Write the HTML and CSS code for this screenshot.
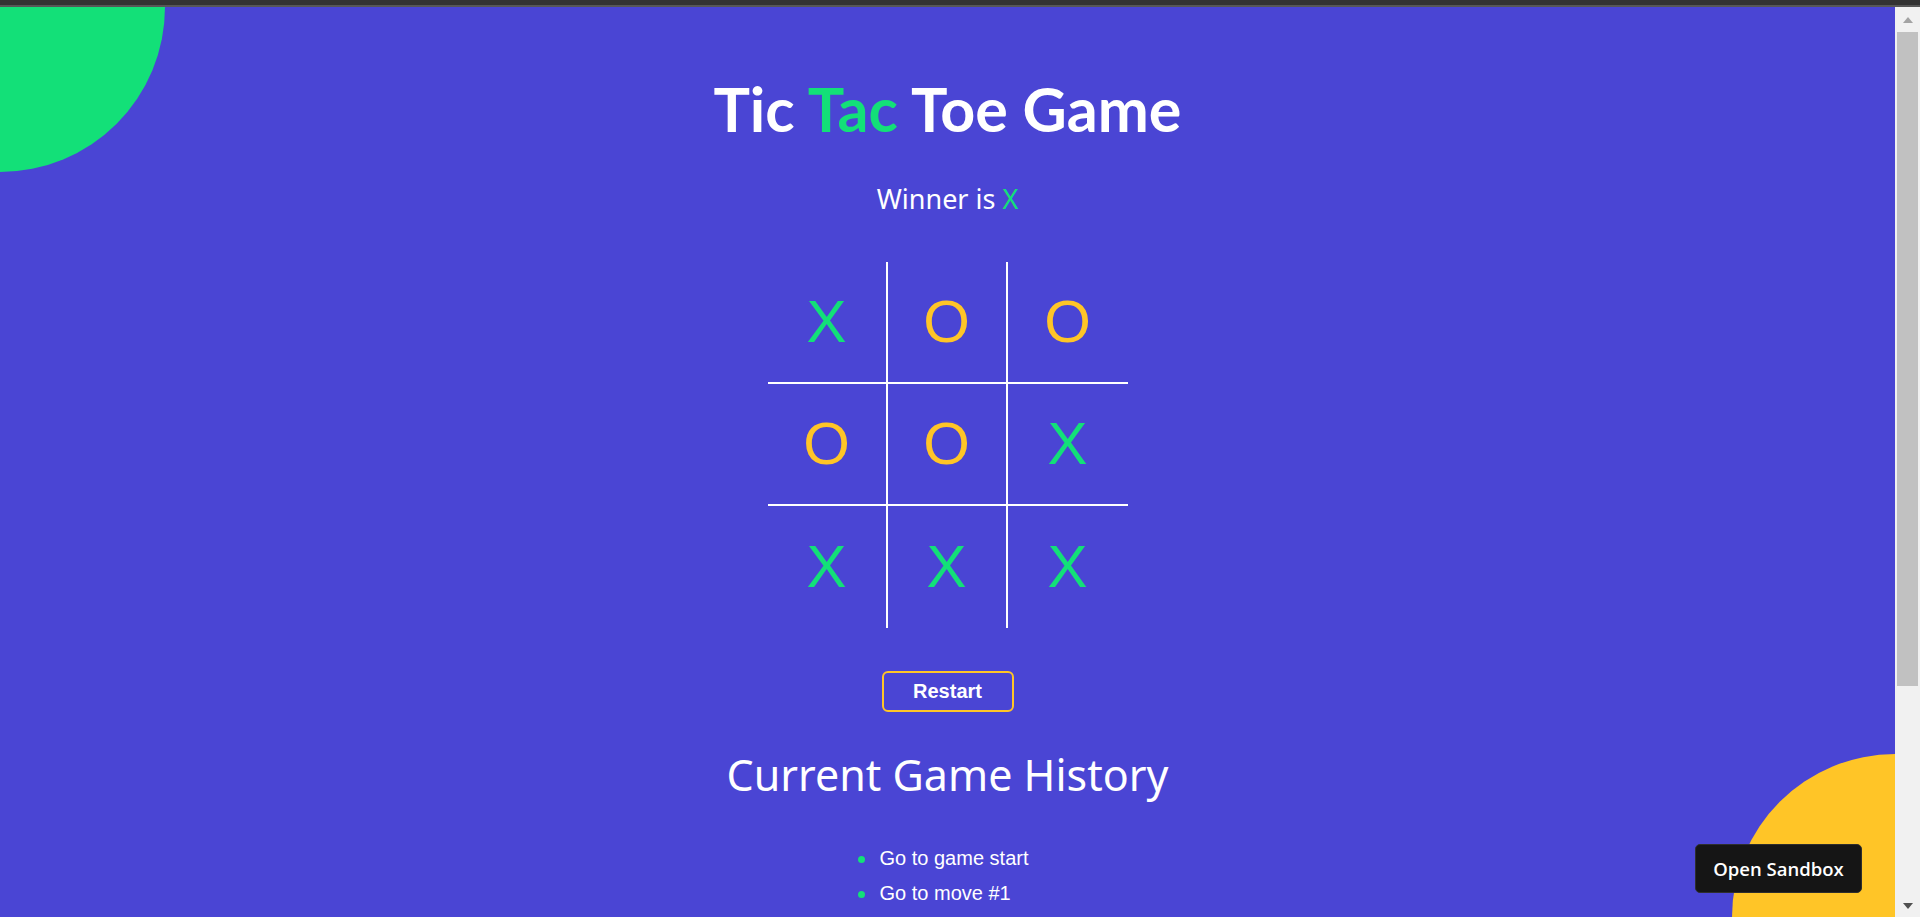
FILE: index.html
```html
<!DOCTYPE html>
<html lang="en">
<head>
<meta charset="utf-8">
<title>Tic Tac Toe Game</title>
<link rel="stylesheet" href="styles.css">
</head>
<body>
<div class="chrome"></div>
<div class="viewport">
  <main class="page">
    <div class="blob blob-green"></div>
    <div class="blob blob-yellow"></div>

    <h1 class="title">Tic <span class="accent">Tac</span> Toe Game</h1>
    <p class="status">Winner is <span class="accent">X</span></p>

    <div class="board">
      <div class="cell c-r c-b x">X</div>
      <div class="cell c-r c-b o">O</div>
      <div class="cell c-b o">O</div>
      <div class="cell c-r c-b o">O</div>
      <div class="cell c-r c-b o">O</div>
      <div class="cell c-b x">X</div>
      <div class="cell c-r x">X</div>
      <div class="cell c-r x">X</div>
      <div class="cell x">X</div>
    </div>

    <button class="restart" type="button">Restart</button>

    <h2 class="history-title">Current Game History</h2>
    <ul class="history">
      <li>Go to game start</li>
      <li>Go to move #1</li>
    </ul>

    <button class="sandbox" type="button">Open Sandbox</button>
  </main>
  <div class="scrollbar">
    <div class="sb-btn"><span class="tri tri-up"></span></div>
    <div class="sb-track"><div class="sb-thumb"></div></div>
    <div class="sb-btn sb-btn-down"><span class="tri tri-down"></span></div>
  </div>
</div>
</body>
</html>
```

FILE: styles.css
```css
* { box-sizing: border-box; }

html, body {
  margin: 0;
  padding: 0;
  height: 917px;
  overflow: hidden;
}

body {
  background: #333333;
  font-family: "Liberation Sans", Arial, sans-serif;
}

.chrome {
  height: 7px;
  background: #333333;
  border-bottom: 2px solid #575757;
}

.viewport {
  display: flex;
  height: 910px;
}

.page {
  position: relative;
  flex: 1;
  overflow: hidden;
  background: #4a45d4;
  color: #ffffff;
  text-align: center;
  padding-top: 64px;
}

.blob {
  position: absolute;
  width: 330px;
  height: 330px;
  border-radius: 50%;
}

.blob-green {
  background: #13e078;
  left: -165px;
  top: -165px;
}

.blob-yellow {
  background: #ffc527;
  right: -163px;
  bottom: -163px;
  width: 326px;
  height: 326px;
}

.accent { color: #13e078; }

.title {
  position: relative;
  margin: 0;
  font-family: "Lato", sans-serif;
  font-weight: 700;
  font-size: 61px;
  line-height: 76px;
}

.status {
  position: relative;
  margin: 36px 0 0;
  font-family: "Noto Sans", sans-serif;
  font-size: 27px;
  line-height: 32px;
}

.board {
  position: relative;
  margin: 47px auto 0;
  display: grid;
  grid-template-columns: repeat(3, 120px);
  grid-template-rows: repeat(3, 122px);
  width: 360px;
}

.cell {
  display: flex;
  align-items: center;
  justify-content: center;
  font-family: "Liberation Sans", Arial, sans-serif;
  font-size: 60px;
  line-height: 1;
}

.c-r { border-right: 2px solid #ffffff; }
.c-b { border-bottom: 2px solid #ffffff; }

.x { color: #13e078; }
.o { color: #ffc527; }

.restart {
  position: relative;
  display: block;
  margin: 43px auto 0;
  width: 132px;
  height: 41px;
  padding: 0;
  background: transparent;
  border: 2px solid #ffc527;
  border-radius: 6px;
  color: #ffffff;
  font-family: "Liberation Sans", Arial, sans-serif;
  font-weight: 700;
  font-size: 20px;
  line-height: 23px;
}

.history-title {
  position: relative;
  margin: 37px 0 0;
  font-family: "Noto Sans", sans-serif;
  font-weight: 400;
  font-size: 43px;
  line-height: 52px;
}

.history {
  position: relative;
  width: fit-content;
  margin: 40px auto 0;
  padding: 0 6px 0 0;
  list-style: none;
  text-align: left;
}

.history li {
  position: relative;
  padding-left: 19px;
  font-size: 20px;
  line-height: 35px;
}

.history li::before {
  content: "";
  position: absolute;
  left: -3px;
  top: 15px;
  width: 7px;
  height: 7px;
  border-radius: 50%;
  background: #13e078;
}

.sandbox {
  position: absolute;
  right: 33px;
  bottom: 24px;
  width: 167px;
  height: 49px;
  padding: 0;
  background: #151515;
  border: 1px solid #2e2e2e;
  border-radius: 5px;
  color: #ffffff;
  font-family: "Open Sans", sans-serif;
  font-weight: 600;
  font-size: 18.5px;
}

.scrollbar {
  width: 25px;
  display: flex;
  flex-direction: column;
  background: #f1f1f1;
}

.sb-btn {
  height: 25px;
  display: flex;
  align-items: center;
  justify-content: center;
}

.sb-btn-down { height: 23px; }

.sb-track {
  flex: 1;
  padding-left: 2px;
}

.sb-thumb {
  width: 21px;
  height: 654px;
  background: #c1c1c1;
}

.tri {
  width: 0;
  height: 0;
  border-left: 5.5px solid transparent;
  border-right: 5.5px solid transparent;
}

.tri-up { border-bottom: 6px solid #a3a3a3; }
.tri-down { border-top: 6px solid #505050; }
```
